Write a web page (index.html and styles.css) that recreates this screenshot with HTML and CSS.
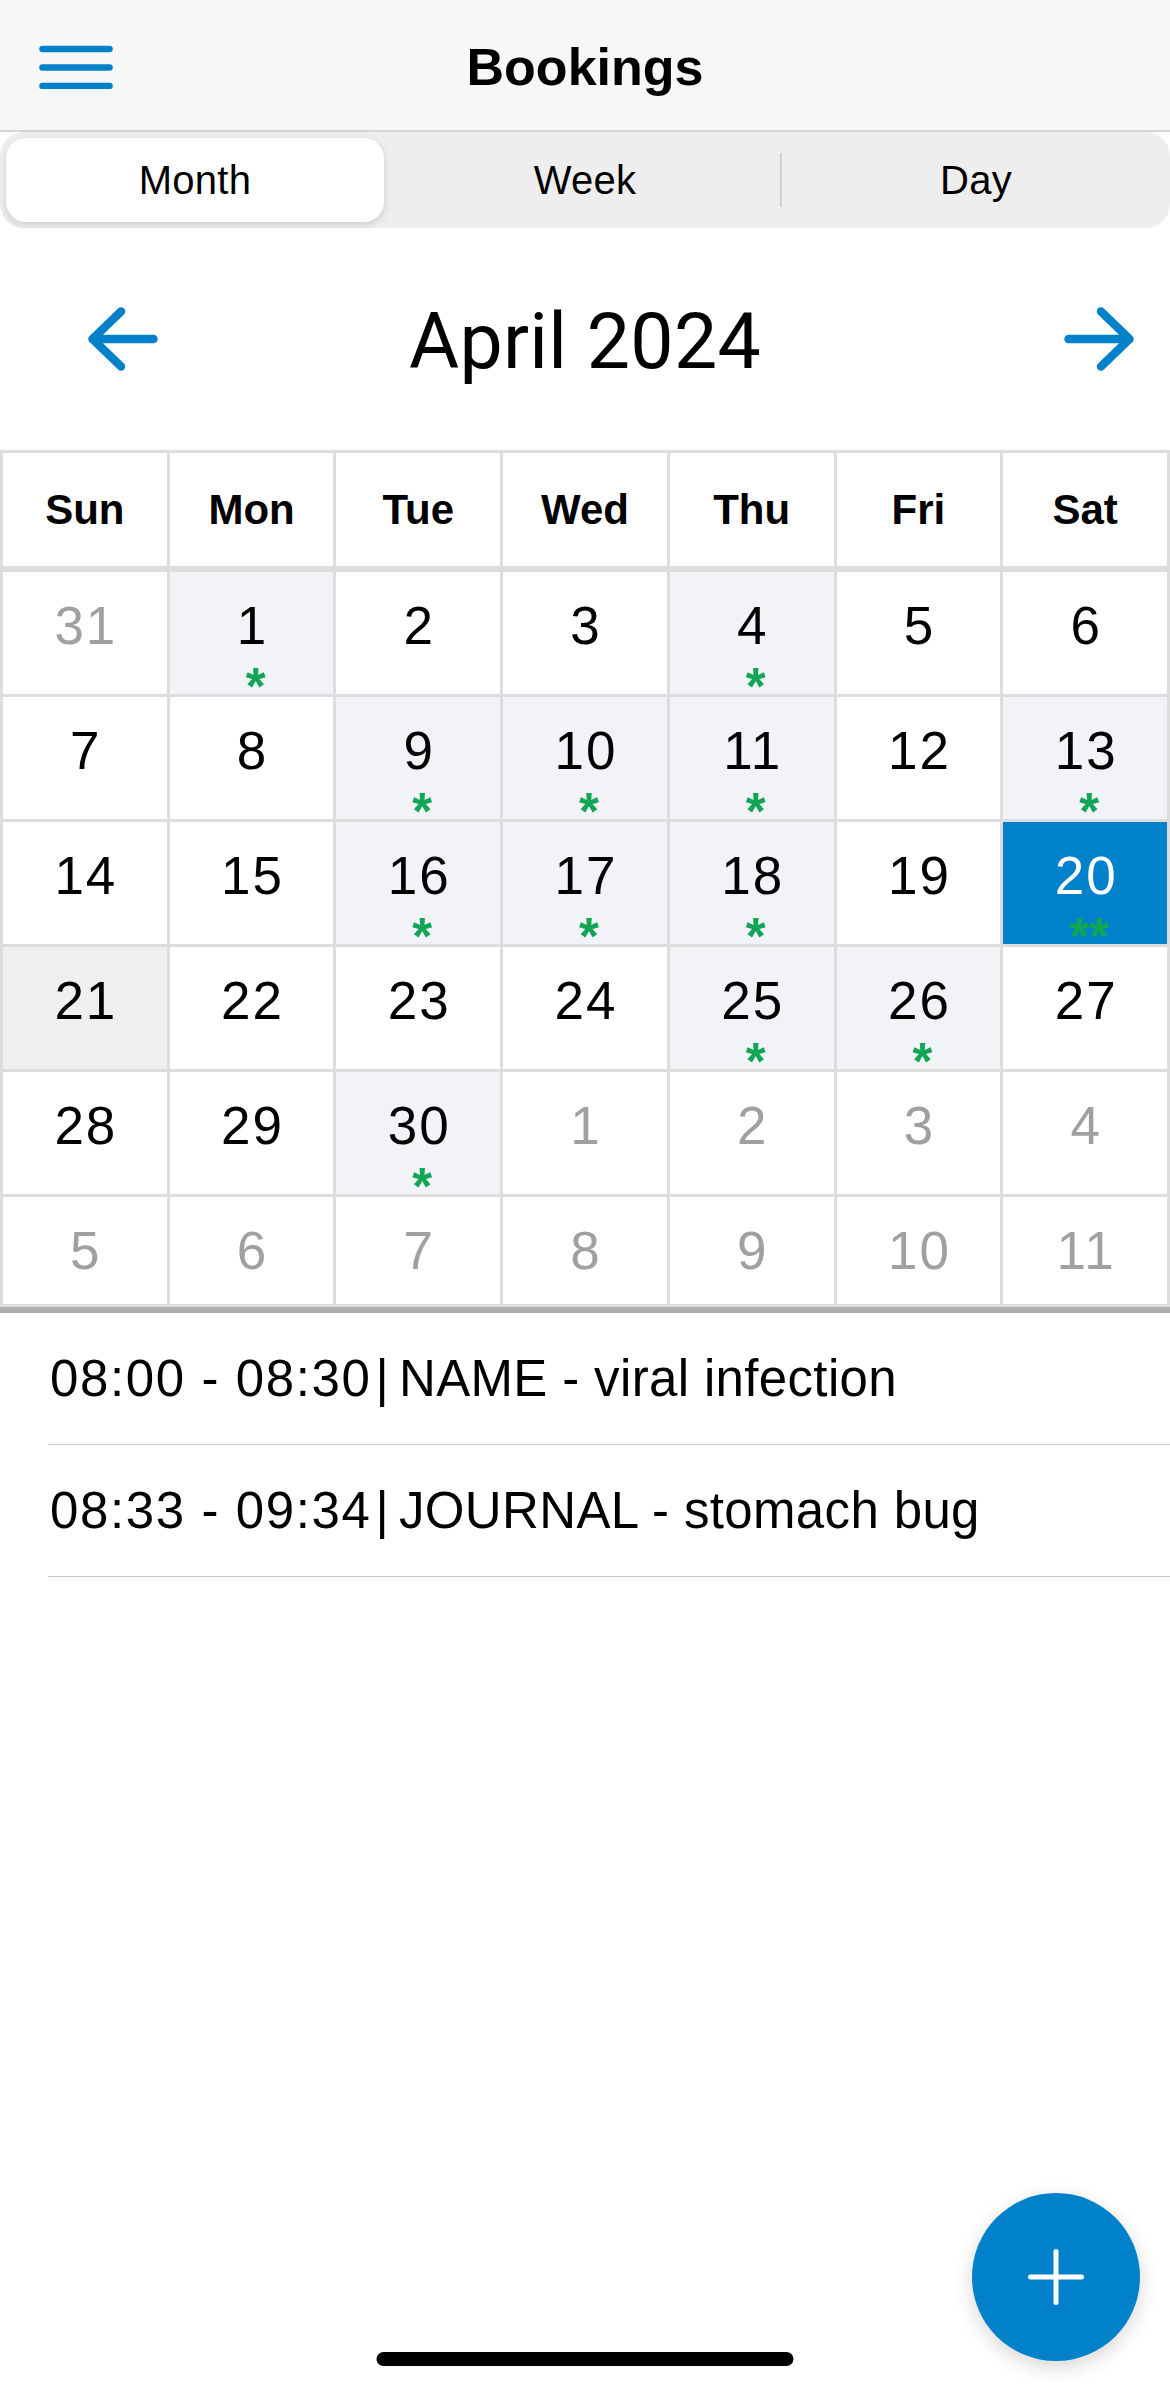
FILE: index.html
```html
<!DOCTYPE html>
<html lang="en">
<head>
<meta charset="utf-8">
<title>Bookings</title>
<link rel="stylesheet" href="styles.css">
</head>
<body>
<header class="navbar">
  <div class="menu-btn">
    <svg width="74" height="44" viewBox="0 0 74 44" aria-hidden="true">
      <g stroke="#0081c9" stroke-width="6.5" stroke-linecap="round">
        <line x1="3.5" y1="4" x2="70.5" y2="4"/>
        <line x1="3.5" y1="22.5" x2="70.5" y2="22.5"/>
        <line x1="3.5" y1="41" x2="70.5" y2="41"/>
      </g>
    </svg>
  </div>
  <h1 class="title">Bookings</h1>
  <div></div>
</header>

<nav class="segmented">
  <div class="seg seg-active">Month</div>
  <div class="seg">Week</div>
  <div class="seg seg-last">Day</div>
</nav>

<section class="month-nav">
  <svg class="arrow arrow-left" width="70" height="64" viewBox="0 0 70 64" aria-hidden="true">
    <path d="M33 4.5 L4.5 32 L33 59.5 M4.5 32 H65.5" fill="none" stroke="#0081c9" stroke-width="8.5" stroke-linecap="round" stroke-linejoin="round"/>
  </svg>
  <div class="month-title">April 2024</div>
  <svg class="arrow arrow-right" width="70" height="64" viewBox="0 0 70 64" aria-hidden="true">
    <path d="M37 4.5 L65.5 32 L37 59.5 M65.5 32 H4.5" fill="none" stroke="#0081c9" stroke-width="8.5" stroke-linecap="round" stroke-linejoin="round"/>
  </svg>
</section>

<div class="week-head">
  <div class="dn">Sun</div><div class="dn">Mon</div><div class="dn">Tue</div><div class="dn">Wed</div><div class="dn">Thu</div><div class="dn">Fri</div><div class="dn">Sat</div>
</div>

<div class="days">
  <div class="day other"><span class="num">31</span></div>
  <div class="day booked"><span class="num">1</span><span class="star">*</span></div>
  <div class="day"><span class="num">2</span></div>
  <div class="day"><span class="num">3</span></div>
  <div class="day booked"><span class="num">4</span><span class="star">*</span></div>
  <div class="day"><span class="num">5</span></div>
  <div class="day"><span class="num">6</span></div>

  <div class="day"><span class="num">7</span></div>
  <div class="day"><span class="num">8</span></div>
  <div class="day booked"><span class="num">9</span><span class="star">*</span></div>
  <div class="day booked"><span class="num">10</span><span class="star">*</span></div>
  <div class="day booked"><span class="num">11</span><span class="star">*</span></div>
  <div class="day"><span class="num">12</span></div>
  <div class="day booked"><span class="num">13</span><span class="star">*</span></div>

  <div class="day"><span class="num">14</span></div>
  <div class="day"><span class="num">15</span></div>
  <div class="day booked"><span class="num">16</span><span class="star">*</span></div>
  <div class="day booked"><span class="num">17</span><span class="star">*</span></div>
  <div class="day booked"><span class="num">18</span><span class="star">*</span></div>
  <div class="day"><span class="num">19</span></div>
  <div class="day selected"><span class="num">20</span><span class="star">**</span></div>

  <div class="day today"><span class="num">21</span></div>
  <div class="day"><span class="num">22</span></div>
  <div class="day"><span class="num">23</span></div>
  <div class="day"><span class="num">24</span></div>
  <div class="day booked"><span class="num">25</span><span class="star">*</span></div>
  <div class="day booked"><span class="num">26</span><span class="star">*</span></div>
  <div class="day"><span class="num">27</span></div>

  <div class="day"><span class="num">28</span></div>
  <div class="day"><span class="num">29</span></div>
  <div class="day booked"><span class="num">30</span><span class="star">*</span></div>
  <div class="day other"><span class="num">1</span></div>
  <div class="day other"><span class="num">2</span></div>
  <div class="day other"><span class="num">3</span></div>
  <div class="day other"><span class="num">4</span></div>

  <div class="day other"><span class="num">5</span></div>
  <div class="day other"><span class="num">6</span></div>
  <div class="day other"><span class="num">7</span></div>
  <div class="day other"><span class="num">8</span></div>
  <div class="day other"><span class="num">9</span></div>
  <div class="day other"><span class="num">10</span></div>
  <div class="day other"><span class="num">11</span></div>
</div>

<ul class="bookings">
  <li class="booking"><span class="time">08:00 - 08:30</span><span class="pipe">|</span>NAME - viral infection</li>
  <li class="booking"><span class="time">08:33 - 09:34</span><span class="pipe">|</span>JOURNAL - stomach bug</li>
</ul>

<button class="fab" aria-label="Add booking">
  <svg width="56" height="56" viewBox="0 0 56 56" aria-hidden="true">
    <g stroke="#ffffff" stroke-width="5" stroke-linecap="round">
      <line x1="2.5" y1="28" x2="53.5" y2="28"/>
      <line x1="28" y1="2.5" x2="28" y2="53.5"/>
    </g>
  </svg>
</button>

<div class="home-indicator"></div>
</body>
</html>
```

FILE: styles.css
```css
* {
  box-sizing: border-box;
}

html, body {
  margin: 0;
  padding: 0;
}

body {
  width: 1170px;
  height: 2391px;
  background: #ffffff;
  color: #000000;
  font-family: "Liberation Sans", Arial, sans-serif;
  position: relative;
  overflow: hidden;
}

/* ---------- Navigation bar ---------- */
.navbar {
  height: 132px;
  background: #f7f7f7;
  border-bottom: 2px solid #d4d4d4;
  display: grid;
  grid-template-columns: 1fr auto 1fr;
  align-items: center;
  padding-top: 4px;
}

.menu-btn {
  padding-left: 39px;
  display: flex;
}

.title {
  margin: 0;
  font-size: 52px;
  font-weight: 700;
  line-height: 1;
}

/* ---------- Segmented control ---------- */
.segmented {
  height: 96px;
  background: #eeeeef;
  border-radius: 24px;
  display: grid;
  grid-template-columns: 390px 390px 390px;
  align-items: center;
}

.seg {
  height: 84px;
  display: flex;
  align-items: center;
  justify-content: center;
  font-size: 40px;
  letter-spacing: 0.3px;
}

.seg-active {
  margin: 0 6px;
  background: #ffffff;
  border-radius: 20px;
  box-shadow: 0 3px 9px rgba(0, 0, 0, 0.13), 0 0 1px rgba(0, 0, 0, 0.08);
}

.seg-last {
  height: 54px;
  border-left: 2px solid #cfcfcf;
}

/* ---------- Month navigation ---------- */
.month-nav {
  height: 222px;
  display: grid;
  grid-template-columns: 1fr auto 1fr;
  align-items: center;
}

.arrow-left {
  justify-self: start;
  margin-left: 88px;
}

.arrow-right {
  justify-self: end;
  margin-right: 36px;
}

.month-title {
  font-family: Roboto, "Liberation Sans", sans-serif;
  font-weight: 400;
  font-size: 77px;
  margin-top: 6px;
  letter-spacing: 0.3px;
}

/* ---------- Calendar grid ---------- */
.week-head,
.days {
  display: grid;
  grid-template-columns: repeat(7, 1fr);
  gap: 3px;
  padding: 3px;
  background: #dddddd;
}

.dn {
  background: #ffffff;
  height: 113px;
  display: flex;
  align-items: center;
  justify-content: center;
  font-size: 42px;
  font-weight: 700;
}

.days {
  border-bottom: 6px solid #adadad;
}

.day {
  background: #ffffff;
  padding: 24px 0 23px;
  display: flex;
  flex-direction: column;
  align-items: center;
}

.num {
  font-size: 53px;
  line-height: 60px;
  letter-spacing: 2px;
  padding-left: 2px;
}

.star {
  height: 15px;
  line-height: 62px;
  font-size: 51px;
  font-weight: 700;
  color: #12a556;
  padding-left: 8px;
}

.day.booked {
  background: #f2f3f7;
}

.day.today {
  background: #efefef;
}

.day.other .num {
  color: #a0a0a0;
}

.day.selected {
  background: #0081c9;
}

.day.selected .num {
  color: #ffffff;
}

/* ---------- Bookings list ---------- */
.bookings {
  list-style: none;
  margin: 0;
  padding: 0 0 0 48px;
}

.booking {
  height: 132px;
  border-bottom: 1px solid #c8c8cb;
  display: flex;
  align-items: center;
  padding-left: 2px;
  font-size: 51px;
  letter-spacing: 0.35px;
  white-space: pre;
}

.time {
  letter-spacing: 1.6px;
}

.pipe {
  margin: 0 10px 0 4px;
}

/* ---------- Floating action button ---------- */
.fab {
  position: absolute;
  right: 30px;
  bottom: 30px;
  width: 168px;
  height: 168px;
  border: none;
  border-radius: 50%;
  background: #0081c9;
  box-shadow: 0 6px 20px rgba(0, 0, 0, 0.16);
  display: flex;
  align-items: center;
  justify-content: center;
  padding: 0;
}

/* ---------- Home indicator ---------- */
.home-indicator {
  position: absolute;
  bottom: 25px;
  left: 50%;
  transform: translateX(-50%);
  width: 417px;
  height: 14px;
  border-radius: 7px;
  background: #000000;
}
```
